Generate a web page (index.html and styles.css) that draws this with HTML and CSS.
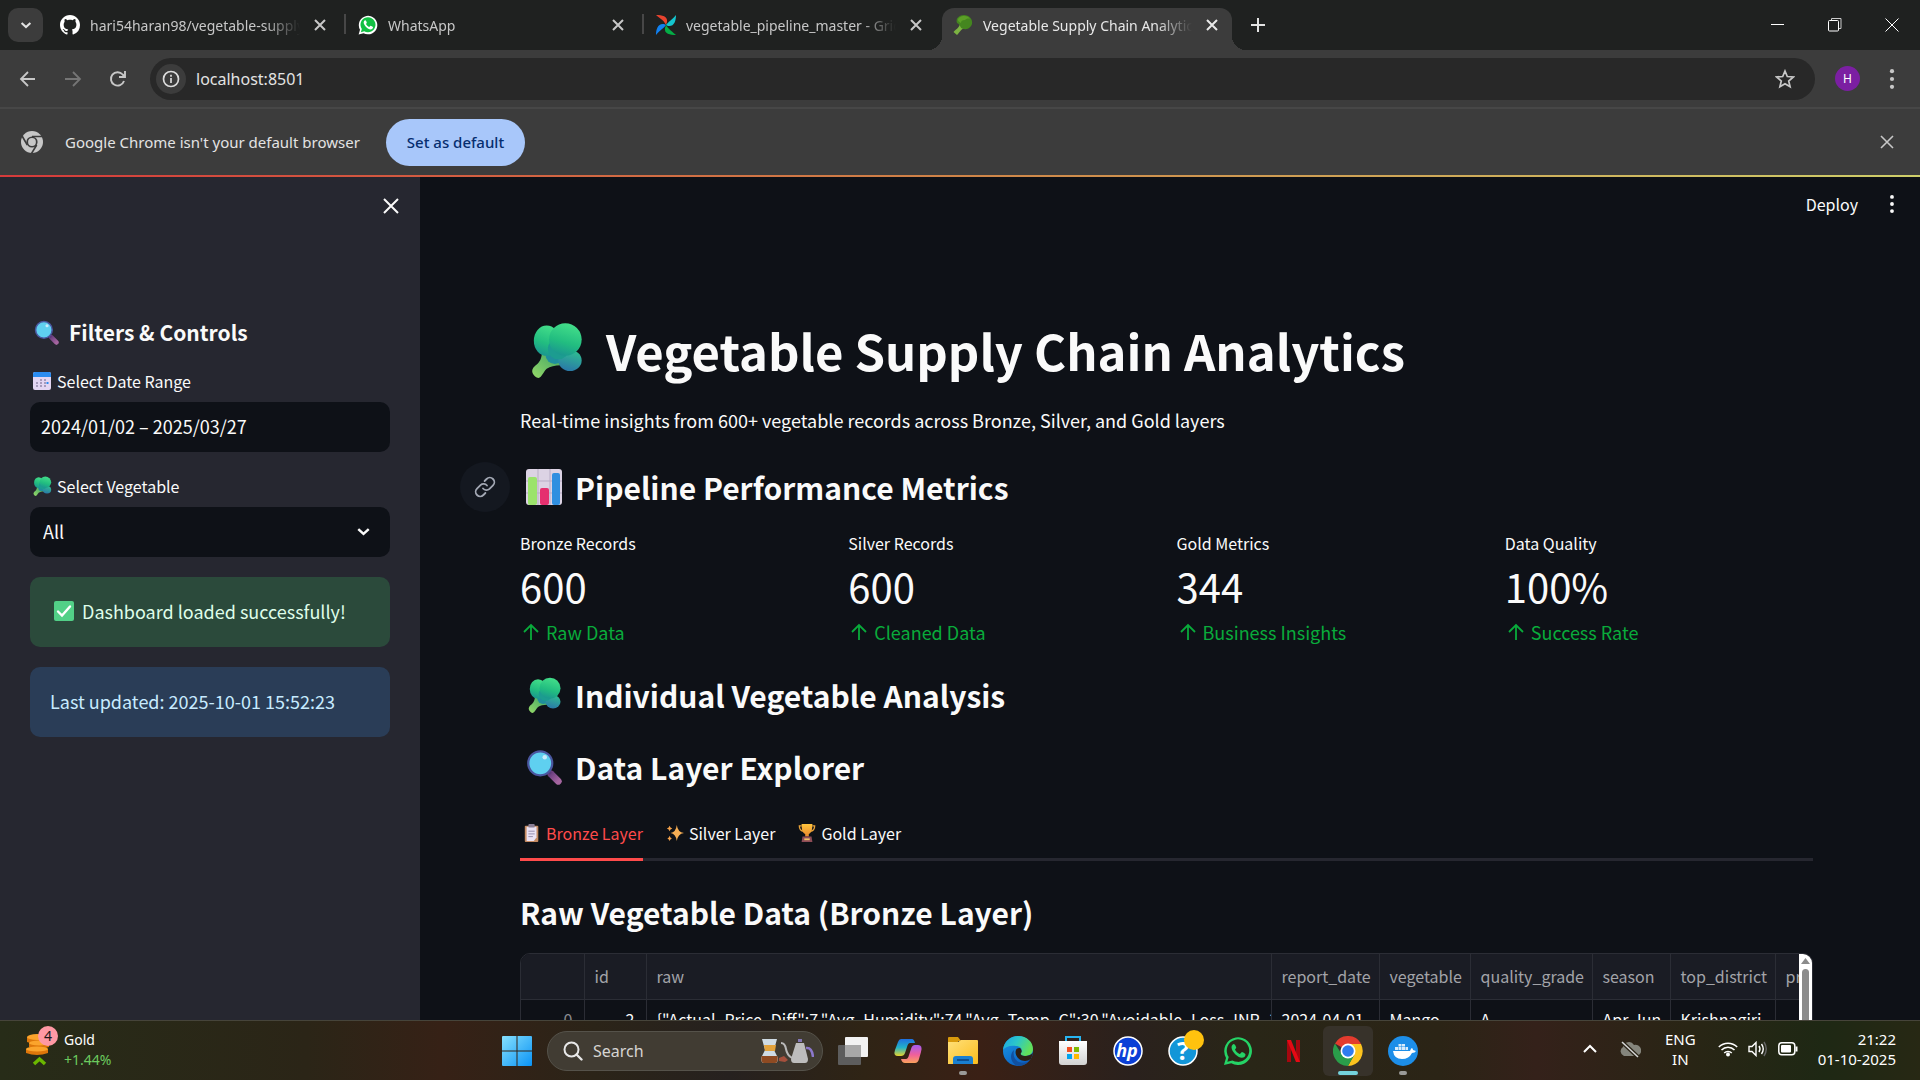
FILE: index.html
```html
<!DOCTYPE html>
<html lang="en">
<head>
<meta charset="utf-8">
<title>Vegetable Supply Chain Analytics</title>
<link rel="stylesheet" href="styles.css">
</head>
<body>
<svg class="defs" aria-hidden="true">
  <defs>
    <linearGradient id="floret" x1="0.7" y1="0" x2="0.4" y2="1"><stop offset="0" stop-color="#45e08a"/><stop offset="0.6" stop-color="#22bd80"/><stop offset="1" stop-color="#1a9690"/></linearGradient>
    <linearGradient id="floretLow" x1="0.7" y1="0" x2="0.4" y2="1"><stop offset="0" stop-color="#2fbf90"/><stop offset="1" stop-color="#2a78a8"/></linearGradient>
    <linearGradient id="stalk" x1="1" y1="0" x2="0" y2="1"><stop offset="0" stop-color="#2f9a64"/><stop offset="1" stop-color="#95d968"/></linearGradient>
    <linearGradient id="pane" x1="0" y1="0" x2="1" y2="1"><stop offset="0" stop-color="#86e0fd"/><stop offset="1" stop-color="#0a93f5"/></linearGradient>
    <linearGradient id="handle" x1="0" y1="0" x2="1" y2="1"><stop offset="0" stop-color="#6b3f7f"/><stop offset="1" stop-color="#a565a0"/></linearGradient>
    <linearGradient id="edgeA" x1="0" y1="0" x2="1" y2="0.4"><stop offset="0" stop-color="#1aa3e8"/><stop offset="0.5" stop-color="#2cc7c9"/><stop offset="1" stop-color="#62e05a"/></linearGradient>
    <linearGradient id="edgeB" x1="0" y1="0" x2="0.6" y2="1"><stop offset="0" stop-color="#1a9be6"/><stop offset="1" stop-color="#0b60c4"/></linearGradient>
    <linearGradient id="copA" x1="0" y1="0" x2="0" y2="1"><stop offset="0" stop-color="#1f6fe0"/><stop offset="0.5" stop-color="#22b2c8"/><stop offset="1" stop-color="#e8d52c"/></linearGradient>
    <linearGradient id="copB" x1="0" y1="0" x2="0" y2="1"><stop offset="0" stop-color="#a45bf0"/><stop offset="0.55" stop-color="#f0609a"/><stop offset="1" stop-color="#fba25c"/></linearGradient>
    <linearGradient id="folder" x1="0" y1="0" x2="1" y2="1"><stop offset="0" stop-color="#ffe07a"/><stop offset="1" stop-color="#fbbd1d"/></linearGradient>
    <linearGradient id="gold" x1="0" y1="0" x2="0" y2="1"><stop offset="0" stop-color="#ffc53d"/><stop offset="1" stop-color="#e8862c"/></linearGradient>
    <linearGradient id="bag" x1="0" y1="0" x2="0" y2="1"><stop offset="0" stop-color="#ffffff"/><stop offset="1" stop-color="#d2d2d2"/></linearGradient>

    <symbol id="i-x" viewBox="0 0 20 20"><path d="M5 5l10 10M15 5L5 15" fill="none" stroke="currentColor" stroke-width="2"/></symbol>
    <symbol id="i-chev" viewBox="0 0 20 20"><path d="M4.500 7.500l5.500 5 5.500-5" fill="none" stroke="currentColor" stroke-width="2.600"/></symbol>
    <symbol id="i-dots" viewBox="0 0 24 24"><g fill="currentColor"><circle cx="12" cy="3.500" r="2.300"/><circle cx="12" cy="12" r="2.300"/><circle cx="12" cy="20.500" r="2.300"/></g></symbol>
    <symbol id="i-broccoli" viewBox="0 0 48 48">
      <path d="M12 24c0 6-1 9-4 12-4 3-5 5-4 8 1 2 3 4 5 4 3-1 4-5 7-8 3-2 7-3 12-3l4-6-14-8z" fill="url(#stalk)"/>
      <circle cx="23" cy="28" r="8" fill="#1f8f9c"/>
      <ellipse cx="36" cy="33" rx="10" ry="9" fill="url(#floretLow)"/>
      <ellipse cx="16" cy="16" rx="11" ry="13" fill="url(#floret)"/>
      <ellipse cx="26" cy="23" rx="9" ry="9" fill="#1c9c90"/>
      <ellipse cx="32" cy="15" rx="14" ry="14" fill="url(#floret)"/>
    </symbol>
    <symbol id="i-lens" viewBox="0 0 48 48">
      <path d="M33 33l10 10" stroke="url(#handle)" stroke-width="9" stroke-linecap="round"/>
      <path d="M28 28l5 5" stroke="#5b3a78" stroke-width="4"/>
      <circle cx="19" cy="19" r="16" fill="#5fd0f0" stroke="#4a57a0" stroke-width="3"/>
      <circle cx="25" cy="11" r="3" fill="#c9ecfa"/>
    </symbol>
    <symbol id="i-up" viewBox="0 0 20 20"><path d="M10 18V3M3 10l7-7 7 7" fill="none" stroke="currentColor" stroke-width="1.800"/></symbol>
    <symbol id="i-whatsapp" viewBox="0 0 32 32">
      <path d="M1 31l2.200-7.600A14.800 14.800 0 1 1 8.800 29z" fill="var(--ring)"/>
      <path d="M4.600 27.400l1.500-5A12 12 0 1 1 10 26z" fill="var(--bub)"/>
      <path d="M11.500 8.500c-.7 0-2.600 1.300-2.400 4 .3 4 6.400 10.600 11 10.700 2.300 0 3.800-1.300 3.900-3.500 0-.9-3.600-2.600-4.100-2.500-.7.300-1.500 2-2.100 1.900-1.500-.3-4.600-3.200-5-4.700 0-.6 1.200-1.300 1.300-2 0-.6-1.400-3.900-2.600-3.900z" fill="var(--ring)"/>
    </symbol>
  </defs>
</svg>

<header class="browser">
  <div class="tabstrip">
    <button class="tabsearch" aria-label="Search tabs"><svg width="16" height="16"><use href="#i-chev"/></svg></button>
    <div class="tab sep">
      <svg width="20" height="20" viewBox="0 0 16 16"><path fill="#fff" d="M8 0C3.580 0 0 3.580 0 8c0 3.540 2.290 6.530 5.470 7.590.4.070.55-.17.55-.38v-1.490c-2.010.370-2.530-.49-2.690-.94-.09-.23-.48-.94-.82-1.130-.28-.15-.68-.52-.01-.53.630-.01 1.080.580 1.230.820.720 1.210 1.870.870 2.330.660.070-.52.280-.87.510-1.070-1.780-.2-3.640-.89-3.640-3.950 0-.87.310-1.590.820-2.150-.08-.2-.36-1.020.080-2.120 0 0 .67-.21 2.200.820.640-.18 1.320-.27 2-.27s1.360.090 2 .27c1.530-1.040 2.200-.82 2.200-.82.440 1.100.160 1.920.080 2.120.510.560.820 1.270.820 2.150 0 3.070-1.870 3.750-3.650 3.950.290.250.540.730.540 1.480v2.200c0 .21.150.460.550.380A8 8 0 0 0 16 8c0-4.420-3.580-8-8-8z"/></svg>
      <span class="label">hari54haran98/vegetable-supply</span>
      <button aria-label="Close tab"><svg width="20" height="20"><use href="#i-x"/></svg></button>
    </div>
    <div class="tab sep">
      <svg class="wa-solid" width="20" height="20"><use href="#i-whatsapp"/></svg>
      <span class="label">WhatsApp</span>
      <button aria-label="Close tab"><svg width="20" height="20"><use href="#i-x"/></svg></button>
    </div>
    <div class="tab">
      <svg width="20" height="20" viewBox="0 0 20 20"><path fill="#e8432e" d="M10 10C7 4 3 3 0 0c6 0 12 1 11 7z"/><path fill="#14c6cf" d="M10 10c2-3 6-5 10-10 0 6-2 12-8 11z"/><path fill="#04ad46" d="M10 10c3 5 7 7 10 10-6 0-12-1-11-7z"/><path fill="#1181f0" d="M10 10c-2 3-6 5-10 10C0 14 2 8 8 9z"/></svg>
      <span class="label">vegetable_pipeline_master - Grid</span>
      <button aria-label="Close tab"><svg width="20" height="20"><use href="#i-x"/></svg></button>
    </div>
    <div class="tab active">
      <svg width="20" height="20" viewBox="0 0 20 20"><path fill="#7cb342" d="M7 9c-1 4-4 5-6.500 8L4 20c3-3 4-6 8-7z"/><path fill="#44861f" d="M4 8C2 3 7 0 11 0c5 0 9 4 8 9-1 3-4 6-8 5C7 14 8 10 4 8z"/><path fill="#5c9f27" d="M5 5c0-2 3-4 6-4 3 0 5 1 6 3-2-1-4 0-5 1-3 0-4 1-4 3-2-1-3-2-3-3z"/></svg>
      <span class="label">Vegetable Supply Chain Analytics</span>
      <button aria-label="Close tab"><svg width="20" height="20"><use href="#i-x"/></svg></button>
    </div>
    <button class="newtab" aria-label="New tab"><svg width="16" height="16" viewBox="0 0 16 16"><path d="M8 1v14M1 8h14" stroke="currentColor" stroke-width="2"/></svg></button>
    <div class="wincontrols">
      <button aria-label="Minimize"><svg width="14" height="14" viewBox="0 0 14 14"><path d="M0 6.500h13" stroke="#fff"/></svg></button>
      <button aria-label="Restore"><svg width="14" height="14" viewBox="0 0 14 14"><path d="M3.500 3V.500h9.500v10h-2" fill="none" stroke="#ccc"/><rect x=".5" y="2.500" width="10" height="10.500" rx="1" fill="none" stroke="#fff"/></svg></button>
      <button aria-label="Close"><svg width="14" height="14" viewBox="0 0 14 14"><path d="M.5.5l13 13M13.500.5l-13 13" stroke="#fff"/></svg></button>
    </div>
  </div>

  <div class="toolbar">
    <button aria-label="Back"><svg width="20" height="20" viewBox="0 0 20 20"><path d="M17 10H3M10 3l-7 7 7 7" fill="none" stroke="currentColor" stroke-width="1.800"/></svg></button>
    <button class="dim" aria-label="Forward"><svg width="20" height="20" viewBox="0 0 20 20"><path d="M2 10h14M10 3l7 7-7 7" fill="none" stroke="currentColor" stroke-width="1.800"/></svg></button>
    <button aria-label="Reload"><svg width="20" height="20" viewBox="0 0 20 20"><path d="M16 12a6.700 6.700 0 1 1-1.300-6.500L17 8M17 2v6h-6" fill="none" stroke="currentColor" stroke-width="1.900"/></svg></button>
    <div class="omnibox">
      <span class="info"><svg width="18" height="18" viewBox="0 0 18 18"><circle cx="9" cy="9" r="7.500" fill="none" stroke="#dcdcdc" stroke-width="1.700"/><path d="M9 8v5M9 4.800v2" stroke="#dcdcdc" stroke-width="1.700"/></svg></span>
      <input aria-label="Address" value="localhost:8501">
      <button aria-label="Bookmark"><svg width="20" height="20" viewBox="0 0 20 20"><path d="M10 2l2.300 5.500 6 .5-4.600 4 1.400 5.800-5.100-3.100-5.100 3.100L6.300 12 1.700 8l6-.5z" fill="none" stroke="currentColor" stroke-width="1.700"/></svg></button>
    </div>
    <button class="avatar" aria-label="Profile">H</button>
    <button aria-label="Menu"><svg width="22" height="22"><use href="#i-dots"/></svg></button>
  </div>

  <div class="infobar">
    <svg width="24" height="24" viewBox="0 0 24 24"><circle cx="12" cy="12" r="11" fill="#c7c7c7"/><path d="M12 6.500h11M7.300 15L1.800 5.500M16.700 15l-5.500 9" stroke="#3c3c3c" stroke-width="1.600"/><circle cx="12" cy="12" r="5.600" fill="#3c3c3c"/><circle cx="12" cy="12" r="3.900" fill="#c7c7c7"/></svg>
    <span>Google Chrome isn't your default browser</span>
    <button class="default">Set as default</button>
    <button class="dismiss" aria-label="Dismiss"><svg width="20" height="20" viewBox="0 0 20 20"><path d="M4 4l12 12M16 4L4 16" stroke="currentColor" stroke-width="1.600"/></svg></button>
  </div>
</header>
<div class="decoration"></div>

<div class="app">
  <aside class="sidebar">
    <button class="collapse" aria-label="Close sidebar"><svg width="24" height="24" viewBox="0 0 24 24"><path d="M5 5l14 14M19 5L5 19" stroke="#fafafa" stroke-width="2"/></svg></button>
    <h2><svg width="25" height="25"><use href="#i-lens"/></svg>Filters &amp; Controls</h2>
    <label for="range"><svg width="20" height="20" viewBox="0 0 20 20"><rect x="1" y="1" width="18" height="18" rx="2" fill="#e3d6f2"/><path d="M1 6V3q0-2 2-2h14q2 0 2 2v3z" fill="#2a8cf0"/><path d="M8 8h2v2H8zM12 8h2v2h-2zM4 11h2v2H4zM8 11h2v2H8zM12 11h2v2h-2zM4 14h2v2H4zM8 14h2v2H8zM12 14h2v2h-2z" fill="#a79cbc"/><path d="M14.500 11h2v2h-2z" fill="#2a8cf0"/></svg>Select Date Range</label>
    <input id="range" class="field" value="2024/01/02 – 2025/03/27">
    <label for="veg"><svg width="20" height="20"><use href="#i-broccoli"/></svg>Select Vegetable</label>
    <div class="selectwrap">
      <select id="veg" class="field"><option>All</option></select>
      <svg width="19" height="19"><use href="#i-chev"/></svg>
    </div>
    <p class="alert ok"><svg width="20" height="20" viewBox="0 0 20 20"><rect width="20" height="20" rx="2" fill="#52d087"/><path d="M4 10.500l4 4 8-9" fill="none" stroke="#fff" stroke-width="2.400" stroke-linecap="round"/></svg>Dashboard loaded successfully!</p>
    <p class="alert note">Last updated: 2025-10-01 15:52:23</p>
  </aside>

  <main class="main">
    <div class="apphead">
      <button>Deploy</button>
      <button aria-label="App menu"><svg width="20" height="20"><use href="#i-dots"/></svg></button>
    </div>
    <div class="block">
      <h1><svg width="56" height="56"><use href="#i-broccoli"/></svg>Vegetable Supply Chain Analytics</h1>
      <p class="intro">Real-time insights from 600+ vegetable records across Bronze, Silver, and Gold layers</p>
      <h2 id="metrics">
        <a class="anchor" href="#metrics" aria-label="Link to section"><svg width="24" height="24" viewBox="0 0 24 24"><g fill="none" stroke="#a3a8b4" stroke-width="1.800" stroke-linecap="round"><path d="M10 13.500a4.500 4.500 0 0 0 6.500.4l3.500-3.500a4.500 4.500 0 0 0-6.400-6.400l-2 2"/><path d="M14 10.500a4.500 4.500 0 0 0-6.500-.4L4 13.600a4.500 4.500 0 0 0 6.400 6.400l2-2"/></g></svg></a>
        <svg width="36" height="36" viewBox="0 0 36 36"><rect width="36" height="36" rx="3" fill="#dcd3e4"/><path d="M12 0v36M24 0v36M0 12h36M0 24h36" stroke="#b9adc6"/><rect x="2" y="8" width="9" height="28" rx="2" fill="#9be36b"/><rect x="14" y="19" width="9" height="17" rx="2" fill="#e5306f"/><rect x="26" y="4" width="8" height="32" rx="2" fill="#2f8fe0"/></svg>Pipeline Performance Metrics</h2>
      <div class="metrics">
        <div><p class="name">Bronze Records</p><p class="value">600</p><p class="delta"><svg width="20" height="20"><use href="#i-up"/></svg>Raw Data</p></div>
        <div><p class="name">Silver Records</p><p class="value">600</p><p class="delta"><svg width="20" height="20"><use href="#i-up"/></svg>Cleaned Data</p></div>
        <div><p class="name">Gold Metrics</p><p class="value">344</p><p class="delta"><svg width="20" height="20"><use href="#i-up"/></svg>Business Insights</p></div>
        <div><p class="name">Data Quality</p><p class="value">100%</p><p class="delta"><svg width="20" height="20"><use href="#i-up"/></svg>Success Rate</p></div>
      </div>
      <h2><svg width="36" height="36"><use href="#i-broccoli"/></svg>Individual Vegetable Analysis</h2>
      <h2><svg width="36" height="36"><use href="#i-lens"/></svg>Data Layer Explorer</h2>
      <div class="layers" role="tablist">
        <button role="tab" class="on"><svg width="18" height="18" viewBox="0 0 18 20"><rect x="1" y="2" width="15" height="18" rx="1" fill="#c58b62"/><path d="M3 3h11v12l-3 4H3z" fill="#eae2f4"/><rect x="5" y="0" width="7" height="4" rx="1" fill="#8a7f95"/><path d="M5 8h7M5 11h7M5 14h5" stroke="#8f86a8"/></svg>Bronze Layer</button>
        <button role="tab"><svg width="18" height="18" viewBox="0 0 20 20"><path d="M12 1q1 8 8 9-7 1-8 9-1-8-7-9 6-1 7-9z" fill="#f6ae54"/><path d="M4 2q.5 2.500 3 3-2.500.5-3 3-.5-2.500-3-3 2.500-.5 3-3zM4 13q.5 2.500 2.500 3-2 .5-2.500 3-.5-2.500-2.500-3 2-.5 2.500-3z" fill="#f4a24b"/></svg>Silver Layer</button>
        <button role="tab"><svg width="18" height="18" viewBox="0 0 20 20"><path d="M4 2H1.500c0 4 2 6 5 6M16 2h2.500c0 4-2 6-5 6" fill="none" stroke="#e8a23a" stroke-width="1.500"/><path d="M4 0h12c0 6-1 10-4 11v3H8v-3C5 10 4 6 4 0z" fill="url(#gold)"/><path d="M5 14h10l1 6H4z" fill="#8d4c56"/><rect x="7" y="16" width="6" height="2" fill="#f2c06a"/></svg>Gold Layer</button>
      </div>
      <h2>Raw Vegetable Data (Bronze Layer)</h2>
      <div class="grid">
        <div class="clip">
          <table>
            <colgroup><col class="c1"><col class="c2"><col class="c3"><col class="c4"><col class="c5"><col class="c6"><col class="c7"><col class="c8"><col class="c9"></colgroup>
            <thead><tr><th></th><th>id</th><th>raw</th><th>report_date</th><th>vegetable</th><th>quality_grade</th><th>season</th><th>top_district</th><th>pr</th></tr></thead>
            <tbody><tr><td class="num idx">0</td><td class="num">2</td><td class="json">{"Actual_Price_Diff":7,"Avg_Humidity":74,"Avg_Temp_C":30,"Avoidable_Loss_INR_10</td><td>2024-04-01</td><td>Mango</td><td>A</td><td>Apr-Jun</td><td>Krishnagiri</td><td></td></tr></tbody>
          </table>
        </div>
        <div class="vscroll"><svg width="9" height="6" viewBox="0 0 9 6"><path d="M4.500 0L9 6H0z" fill="#8b8b8b"/></svg><span></span></div>
      </div>
    </div>
  </main>
</div>

<footer class="taskbar">
  <div class="widget">
    <span class="coins">
      <svg width="25" height="32" viewBox="0 0 25 32"><g fill="#dd760a"><path d="M1 3h20v5q-10 4-20 0zM3 9h20v4q-10 4-20 0zM0 15h22v4q-11 4-22 0z"/></g><g fill="#fba42c"><ellipse cx="11" cy="3" rx="10" ry="3"/><ellipse cx="13" cy="9" rx="10" ry="2.500"/><ellipse cx="11" cy="15" rx="11" ry="2.500"/></g><path d="M8 30l5.500-5 5.500 5" fill="none" stroke="#6bb700" stroke-width="3.500"/></svg>
      <b>4</b>
    </span>
    <span class="quote">Gold<em>+1.44%</em></span>
  </div>

  <nav class="dock">
    <button aria-label="Start"><svg width="30" height="30" viewBox="0 0 30 30"><g fill="url(#pane)"><path d="M0 1q0-1 1-1h13.500v14.500H0zM15.500 0H29q1 0 1 1v13.500H15.500zM0 15.500h14.500V30H1q-1 0-1-1zM15.500 15.500H30V29q0 1-1 1H15.500z"/></g></svg></button>
    <label class="search">
      <svg width="20" height="20" viewBox="0 0 20 20"><circle cx="8.500" cy="8.500" r="7" fill="none" stroke="#e8e8e8" stroke-width="2"/><path d="M13.500 13.500l5 5" stroke="#e8e8e8" stroke-width="2.400" stroke-linecap="round"/></svg>
      <input type="text" placeholder="Search" aria-label="Search">
      <svg width="54" height="26" viewBox="0 0 54 26"><path d="M2 1h15l-3 11 4 8q0 5-3 5H4q-3 0-3-5l4-8z" fill="#cfdbe4"/><path d="M1.500 18h16q1 7-2.500 7H4q-3.500 0-2.500-7z" fill="#8e4a22"/><path d="M4 7h12l-1 6H5z" fill="#e2a23c"/><path d="M19 20l5-2 4 4-3 2-6-1z" fill="#a5503c"/><path d="M21 5q4 0 5 6t6 9" fill="none" stroke="#b9b9b9" stroke-width="2"/><path d="M36 5h8l4 16q0 4-3 4H34q-3 0-3-4z" fill="#bdbdbd"/><path d="M38 1h4v3h-4z" fill="#8478b8"/><path d="M46 10q6-1 7 9" fill="none" stroke="#8c78cc" stroke-width="2.500"/></svg>
    </label>
    <button aria-label="Task view"><svg width="30" height="28" viewBox="0 0 30 28"><rect x="7" width="23" height="20" rx="1" fill="#f2f2f2"/><rect y="8" width="23" height="20" rx="1" fill="#5d5d5d"/><path d="M7 8h16v12H7z" fill="#a8a8a8"/></svg></button>
    <button aria-label="Copilot"><svg width="30" height="30" viewBox="0 0 30 30"><path d="M8 3h11q2 0 3 4h-5q-2 0-3 4l-2 6q-1 3-4 3H5q-5 0-3-6l3-8q1-3 3-3z" fill="url(#copA)"/><path d="M22 27H12q-3 0-4-4h5q2 0 3-4l2-6q1-4 4-4h3q5 0 3 7l-2 7q-1 4-4 4z" fill="url(#copB)"/></svg></button>
    <button class="run" aria-label="File Explorer"><svg width="30" height="28" viewBox="0 0 30 28"><path d="M0 1q0-1 1-1h9l3 4h-3v4H0z" fill="#d99a0c"/><path d="M0 5h10l3-2h16q1 0 1 1v22q0 1-1 1H0z" fill="url(#folder)"/><path d="M5 27v-5q0-3 3-3h14q3 0 3 3v5z" fill="#1a7fd0"/><path d="M9 23h12" stroke="#0a3f7c" stroke-width="1.500"/></svg></button>
    <button aria-label="Edge"><svg width="30" height="30" viewBox="0 0 30 30"><circle cx="15" cy="15" r="15" fill="url(#edgeB)"/><path d="M0 14C1 5 8 0 15 0c9 0 15 6 15 13 0 5-4 7-8 7-4 0-5-2-4-3 2-3 0-7-5-7C7 9 2 11 0 14z" fill="url(#edgeA)"/><path d="M11 14c-2 9 4 15 14 12-4 4-8 4-10 4C9 28 5 20 11 14z" fill="#1150a0"/><path d="M17 12c2 2 2 4 1 5s0 3 4 3c3 0 6-1 8-3l-2 6c-2 1-4 2-6 2-6 0-11-6-9-11 1-2 3-2 4-2z" fill="#2c2016"/></svg></button>
    <button aria-label="Store"><svg width="30" height="30" viewBox="0 0 30 30"><path d="M8 6V1h14v5" fill="none" stroke="#28b4f0" stroke-width="2"/><path d="M1 5h28v21q0 3-3 3H4q-3 0-3-3z" fill="url(#bag)"/><path d="M9 11h5v5H9z" fill="#f25022"/><path d="M16 11h5v5h-5z" fill="#7fba00"/><path d="M9 18h5v5H9z" fill="#00a4ef"/><path d="M16 18h5v5h-5z" fill="#ffb900"/></svg></button>
    <button aria-label="HP"><svg width="30" height="30" viewBox="0 0 30 30"><circle cx="15" cy="15" r="14" fill="#0b3fd6" stroke="#fff" stroke-width="1.500"/><text x="14" y="21" class="hp">hp</text></svg></button>
    <button aria-label="Help"><svg class="help" width="30" height="30" viewBox="0 0 30 30"><circle cx="15" cy="15" r="14" fill="#1296d8" stroke="#fff" stroke-width="1.500"/><text x="15" y="24" class="qm">?</text><circle cx="26" cy="4" r="10" fill="#ffc20e"/></svg></button>
    <button aria-label="WhatsApp"><svg class="wa-line" width="30" height="30"><use href="#i-whatsapp"/></svg></button>
    <button aria-label="Netflix"><svg width="13" height="22" viewBox="0 0 13 22"><rect width="4" height="22" fill="#a5070f"/><rect x="9" width="4" height="22" fill="#a5070f"/><path d="M0 0h4l9 22H9z" fill="#e50914"/></svg></button>
    <button class="run current" aria-label="Chrome"><svg width="30" height="30" viewBox="0 0 30 30"><path d="M15 15L2 7.500A15 15 0 0 1 28 7.500z" fill="#e33b2e"/><path d="M15 8h13a15 15 0 0 1-13 22l6-11z" fill="#fcc31e"/><path d="M2 7.500A15 15 0 0 0 15 30l6.500-11.300H9z" fill="#2a9d4a"/><circle cx="15" cy="15" r="7.500" fill="#fff"/><circle cx="15" cy="15" r="5.800" fill="#2f7cf0"/></svg></button>
    <button class="run" aria-label="Docker"><svg width="30" height="30" viewBox="0 0 30 30"><circle cx="15" cy="15" r="15" fill="#1d8ee8"/><path d="M5 15h17q1-3 2-3 1 1 1 2l3 1q-1 2-4 2-3 6-10 6-8 0-9-8z" fill="#fff"/><path d="M7 11h3v3H7zM10.500 11h3v3h-3zM14 11h3v3h-3zM17.500 11h2.500v3h-2.500zM10.500 8h3v2.500h-3zM14 8h3v2.500h-3z" fill="#d8ecfb"/></svg></button>
  </nav>

  <div class="tray">
    <svg width="16" height="16" viewBox="0 0 16 16"><path d="M2 11l6-6 6 6" fill="none" stroke="#fff" stroke-width="2"/></svg>
    <svg width="22" height="18" viewBox="0 0 22 18"><path d="M5 16a5 5 0 0 1-1-9 6 6 0 0 1 11-2 5 5 0 0 1 3 11z" fill="#85857c"/><path d="M3 2l16 15" stroke="#2a2417" stroke-width="4"/><path d="M3 2l16 15" stroke="#d8d8d8" stroke-width="1.500"/></svg>
    <span class="lang">ENG<br>IN</span>
    <span class="status">
      <svg width="20" height="16" viewBox="0 0 20 16"><g fill="none" stroke="#fff" stroke-width="1.500"><path d="M.8 6a13 13 0 0 1 18.400 0M3.500 9a9 9 0 0 1 13 0M6.200 12a5.500 5.500 0 0 1 7.600 0"/></g><circle cx="10" cy="13.500" r="2" fill="#fff"/></svg>
      <svg width="20" height="16" viewBox="0 0 20 16"><path d="M1 5.500h3l4-4v13l-4-4H1z" fill="none" stroke="#fff" stroke-width="1.400"/><path d="M11 5q2 3 0 6M13.500 3q3.500 5 0 10" fill="none" stroke="#fff" stroke-width="1.400"/><path d="M16 1q4.500 7 0 14" fill="none" stroke="#666" stroke-width="1.400"/></svg>
      <svg width="20" height="14" viewBox="0 0 20 14"><rect x=".8" y=".8" width="16" height="12" rx="3" fill="none" stroke="#fff" stroke-width="1.500"/><rect x="3" y="3" width="10" height="7.600" rx="1" fill="#fff"/><path d="M18.500 4.500v5" stroke="#fff" stroke-width="2"/></svg>
    </span>
    <time>21:22<br>01-10-2025</time>
  </div>
</footer>
</body>
</html>
```
FILE: styles.css
```css
* { box-sizing: border-box; }
body {
  margin: 0;
  height: 100vh;
  display: flex;
  flex-direction: column;
  overflow: hidden;
  background: #0e1117;
  color: #fafafa;
  font-family: "Noto Sans CJK SC", "Noto Sans", sans-serif;
  font-size: 18px;
}
h1, h2, p { margin: 0; }
button, input, select { font: inherit; color: inherit; background: none; border: 0; padding: 0; margin: 0; }
input, select { outline: 0; min-width: 0; }
svg { display: block; flex: none; }
.defs { position: absolute; width: 0; height: 0; }

/* Browser frame */
.browser { background: #3c3c3c; color: #e3e3e3; font-family: "Noto Sans", sans-serif; font-size: 15px; }
.tabstrip { display: flex; align-items: stretch; height: 50px; padding: 8px 0 0 8px; background: #1f2120; font-size: 14px; }
.tabsearch { width: 35px; height: 34px; margin-right: 5px; border-radius: 10px; background: #3c3c3c; display: grid; place-items: center; }
.tab { position: relative; flex: 0 1 298px; display: flex; align-items: center; gap: 10px; min-width: 0; padding: 0 16px 8px 12px; color: #c7c7c7; }
.tab .label { flex: 1; overflow: hidden; white-space: nowrap; -webkit-mask-image: linear-gradient(90deg, #000 calc(100% - 36px), transparent); mask-image: linear-gradient(90deg, #000 calc(100% - 36px), transparent); }
.tab.sep::after { content: ""; position: absolute; right: 0; top: 6px; width: 2px; height: 20px; background: #474747; }
.tab.active { flex-basis: 290px; padding: 0 10px 8px 11px; background: #3c3c3c; border-radius: 12px 12px 0 0; color: #e8e8e8; }
.tab.active::before, .tab.active::after { content: ""; position: absolute; bottom: 0; width: 14px; height: 14px; }
.tab.active::before { right: 100%; background: radial-gradient(circle at 0 0, #1f2120 14px, #3c3c3c 14px); }
.tab.active::after { left: 100%; background: radial-gradient(circle at 100% 0, #1f2120 14px, #3c3c3c 14px); }
.newtab { width: 52px; padding-bottom: 8px; display: grid; place-items: center; }
.wincontrols { display: flex; margin-left: auto; padding-bottom: 8px; }
.wincontrols button { width: 57px; display: grid; place-items: center; }
.wa-solid { --ring: #fff; --bub: #12c043; }
.wa-line { --ring: #25d366; --bub: #2b2617; }

.toolbar { display: flex; align-items: center; gap: 25px; height: 59px; padding: 0 17px 0 18px; border-bottom: 2px solid #474747; color: #c7c7c7; }
.dim { color: #757575; }
.omnibox { flex: 1; display: flex; align-items: center; height: 42px; margin-left: -3px; padding: 0 20px 0 6px; border-radius: 21px; background: #282828; font-size: 16px; }
.info { width: 30px; height: 30px; border-radius: 50%; background: #3c3c3c; display: grid; place-items: center; }
.omnibox input { flex: 1; margin-left: 10px; color: #e3e3e3; }
.avatar { width: 25px; height: 25px; margin-left: -5px; border-radius: 50%; background: #7b1fa2; color: #fff; font-size: 12px; line-height: 25px; text-align: center; }
.avatar + button { margin-left: -4px; }

.infobar { display: flex; align-items: center; gap: 21px; height: 66px; padding: 0 23px 0 20px; }
.default { height: 47px; margin-left: 5px; padding: 0 21px; border-radius: 24px; background: #a8c7fa; color: #062e6f; font-weight: 500; }
.dismiss { margin-left: auto; color: #c7c7c7; }
.decoration { height: 2px; flex: none; background: linear-gradient(90deg, #d63b3b, #cf8448 50%, #cfcf6a); }

/* Application */
.app { flex: 1; min-height: 0; display: flex; overflow: hidden; }
.sidebar { flex: none; width: 420px; padding: 17px 30px 0; background: #262730; display: flex; flex-direction: column; }
.collapse { align-self: flex-end; margin-right: -13px; }
.sidebar h2 { display: flex; align-items: center; gap: 10px; margin-top: 96px; padding-left: 4px; font-size: 21px; line-height: 36px; font-weight: 700; }
.sidebar label { display: flex; align-items: center; gap: 5px; margin: 19px 0 9px; padding-left: 2px; font-size: 16px; line-height: 24px; }
.field { width: 100%; height: 50px; padding: 0 11px 2px; border-radius: 10px; background: #0e1117; font-size: 18px; }
.sidebar .field + label { margin-top: 22px; }
.selectwrap { position: relative; }
.selectwrap select { appearance: none; padding: 0 13px 2px; }
.selectwrap svg { position: absolute; right: 17px; top: 15px; pointer-events: none; }
.alert { display: flex; align-items: center; gap: 8px; margin-top: 20px; padding: 19px 20px 21px; border-radius: 10px; line-height: 30px; }
.ok { padding-left: 24px; background: #2b4a3b; color: #dffde9; }
.note { background: #2a3d57; color: #c7ebff; }

.main { flex: 1; min-width: 0; }
.apphead { display: flex; justify-content: flex-end; align-items: center; gap: 24px; height: 54px; padding-right: 18px; font-size: 16px; }
.block { padding: 86px 107px 0 100px; }
.block h1 { display: flex; align-items: center; gap: 22px; padding-left: 8px; font-size: 49px; line-height: 66px; font-weight: 700; }
.intro { margin-top: 22px; line-height: 30px; }
.block h2 { position: relative; display: flex; align-items: center; gap: 13px; margin-top: 30px; font-size: 30px; line-height: 42px; font-weight: 700; }
.block #metrics { margin-top: 31px; }
.block h2 > svg { margin-left: 6px; }
.anchor { position: absolute; right: 100%; margin-right: 10px; width: 50px; height: 50px; border-radius: 50%; background: #141820; display: grid; place-items: center; }
.metrics { display: grid; grid-template-columns: repeat(4, 1fr); gap: 20px; margin-top: 23px; }
.name { font-size: 16px; line-height: 24px; }
.value { margin-top: 1px; font-size: 40px; line-height: 60px; }
.delta { display: flex; align-items: center; gap: 5px; margin-top: 1px; padding-left: 1px; line-height: 30px; color: #09ab3b; }
.metrics + h2 { margin-top: 27px; }
.layers { display: flex; gap: 20px; margin-top: 18px; border-bottom: 3px solid #262730; font-size: 16px; }
.layers button { display: flex; align-items: center; gap: 5px; height: 55px; margin-bottom: -3px; padding: 2px 0 0 3px; border-bottom: 3px solid transparent; }
.layers .on { color: #ff4b4b; border-color: #ff4b4b; }

/* Data grid */
.grid { display: flex; height: 200px; margin-top: 20px; border: 1px solid #2b2d35; border-radius: 10px; overflow: hidden; }
.clip { flex: 1; min-width: 0; overflow: hidden; }
table { table-layout: fixed; width: 1370px; border-collapse: collapse; font-size: 16px; }
th, td { height: 45px; padding: 0 10px; border: solid #2b2d35; border-width: 0 1px 1px 0; text-align: left; font-weight: 400; line-height: 24px; white-space: nowrap; overflow: hidden; }
th { background: #1a1c24; color: #a3a4a9; }
td { height: 43px; padding-bottom: 4px; }
.num { text-align: right; padding-right: 11px; }
.idx { color: #8a8b90; }
.json { padding-right: 0; }
.c1 { width: 63px; } .c2 { width: 62px; } .c3 { width: 625px; } .c4 { width: 108px; } .c5 { width: 91px; }
.c6 { width: 122px; } .c7 { width: 78px; } .c8 { width: 105px; } .c9 { width: 116px; }
.vscroll { flex: none; width: 13px; padding: 4px 3px 0; background: #fff; display: flex; flex-direction: column; align-items: center; gap: 5px; }
.vscroll span { flex: 1; width: 7px; border-radius: 4px; background: #8b8b8b; }

/* Taskbar */
.taskbar {
  flex: none; height: 60px; display: grid; grid-template-columns: 1fr auto 1fr; align-items: center;
  border-top: 1px solid #46443a; color: #fff; font-family: "Noto Sans", sans-serif; font-size: 15px; line-height: 20px;
  background: linear-gradient(90deg, #272c18, #2b2517 16%, #362116 23%, #2b2418 31%, #26211f 38%, #2f2415 45%, #3a2015 51%, #2a211d 59%, #292617 65%, #2b2416 75%, #34211a 80%, #292515 88%, #1e2814 95%, #272814);
}
.widget { display: flex; align-items: center; gap: 13px; padding: 0 0 2px 26px; font-size: 14px; }
.coins { position: relative; }
.coins b { position: absolute; left: 12px; top: -8px; width: 20px; height: 20px; border-radius: 50%; background: #ff99a4; color: #1a1a1a; font-weight: 400; text-align: center; }
.quote em { display: block; font-style: normal; color: #6ccb5f; }
.dock { display: flex; align-items: center; gap: 5px; }
.dock button { position: relative; width: 50px; height: 50px; border-radius: 6px; display: grid; place-items: center; }
.help { overflow: visible; }
.run::after { content: ""; position: absolute; bottom: 1px; left: 21px; width: 8px; height: 4px; border-radius: 2px; background: #9a9a98; }
.dock .current { background: #37322a; }
.current::after { left: 15px; width: 20px; background: #74d3dc; }
.search { display: flex; align-items: center; gap: 10px; width: 276px; height: 40px; padding: 0 8px 0 15px; border: 1px solid #55524a; border-radius: 20px; background: #413c33; }
.search input { flex: 1; font-size: 16px; }
.search input::placeholder { color: #d6d5d2; opacity: 1; }
.hp { fill: #fff; font: italic 700 18px "Open Sans", sans-serif; text-anchor: middle; }
.qm { fill: #fff; font: 700 25px "Open Sans", sans-serif; text-anchor: middle; }
.tray { display: flex; align-items: center; justify-content: flex-end; padding: 0 24px 3px 0; text-align: center; }
.lang { margin: 0 22px 0 24px; }
.tray > svg + svg { margin-left: 21px; }
.status { display: flex; align-items: center; gap: 10px; }
time { margin-left: 20px; text-align: right; }
```
